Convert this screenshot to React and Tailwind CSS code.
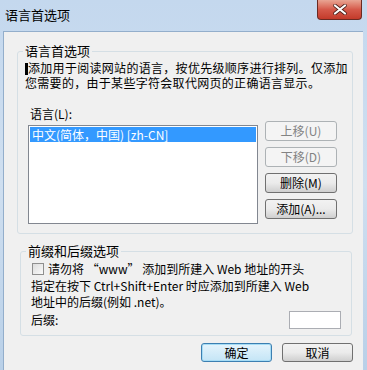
// App.jsx — 语言首选项 dialog (Windows 7 style)
const font = { fontFamily: '"Noto Sans CJK SC", "Liberation Sans", sans-serif' };

export default function App() {
  return (
    <div
      className="relative w-[367px] h-[370px] overflow-hidden bg-gradient-to-b from-[#c4d8ee] via-[#cfdff0] to-[#b9d0e8] text-[12px] leading-[16px] text-black"
      style={font}
    >
      {/* Title bar */}
      <div className="h-[31px] flex items-start pt-[7px] pl-[5px]">
        <span className="text-[13px] leading-[16px] text-black">语言首选项</span>
      </div>
      <CloseButton />

      {/* Client area */}
      <div className="ml-[3px] mr-[4px] h-[339px] bg-[#f0f0f0] border-t border-l border-[#93aecb] px-[13px]">
        <GroupBox title="语言首选项" className="mt-[11px] w-[333px] h-[191px]">
          <p className="pl-[7px] pr-[4px] mt-[1px] leading-[15px] tracking-[0.3px] whitespace-nowrap">
            <span className="inline-block w-[3px] h-[12px] bg-black align-[-2px]" />
            添加用于阅读网站的语言，按优先级顺序进行排列。仅添加
            <br />
            您需要的，由于某些字符会取代网页的正确语言显示。
          </p>
          <div className="pl-[12px] mt-[16px]">语言(L):</div>
          <div className="flex pl-[10px] mt-[3px] gap-[7px]">
            <div className="w-[230px] h-[99px] bg-white border border-[#828790] p-[1px]">
              <div className="h-[15px] bg-[#3399ff] text-white leading-[15px] pl-[2px]">
                中文(简体，中国) [zh-CN]
              </div>
            </div>
            <div className="flex flex-col gap-[6px] -mt-[4px]">
              <WinButton disabled>上移(U)</WinButton>
              <WinButton disabled>下移(D)</WinButton>
              <WinButton>删除(M)</WinButton>
              <WinButton>添加(A)...</WinButton>
            </div>
          </div>
        </GroupBox>

        <GroupBox title="前缀和后缀选项" className="mt-[9px] ml-[3px] w-[332px] h-[93px]">
          <label className="flex items-center gap-[4px] pl-[11px] mt-[2px]">
            <span className="w-[12px] h-[12px] border border-[#8f8f8f] bg-gradient-to-br from-[#dcdcdc] to-[#fbfbfb]" />
            <span>请勿将 “www” 添加到所建入 Web 地址的开头</span>
          </label>
          <p className="pl-[10px] mt-[1px] leading-[16px]">
            指定在按下 Ctrl+Shift+Enter 时应添加到所建入 Web
            <br />
            地址中的后缀(例如 .net)。
          </p>
          <div className="flex items-center justify-between pl-[10px] pr-[10px] mt-[1px]">
            <span>后缀:</span>
            <span className="w-[52px] h-[18px] bg-white border border-[#abadb3]" />
          </div>
        </GroupBox>

        <div className="flex justify-end gap-[10px] mt-[7px] mr-[-3px]">
          <button className="w-[71px] h-[19px] rounded-[3px] border border-[#3c7fb1] bg-gradient-to-b from-[#e5f4fc] to-[#c4e5f6] shadow-[inset_0_0_0_1px_#a6dcf5] text-[12px] leading-[16px]">
            确定
          </button>
          <button className="w-[71px] h-[19px] rounded-[3px] border border-[#707070] bg-gradient-to-b from-[#f2f2f2] via-[#ebebeb] to-[#cfcfcf] text-[12px] leading-[16px]">
            取消
          </button>
        </div>
      </div>
    </div>
  );
}

function GroupBox({ title, className, children }) {
  return (
    <fieldset className={`border border-[#d5dfe5] rounded-[3px] ${className}`}>
      <legend className="ml-[5px] px-[2px] text-[13px] leading-[16px]">{title}</legend>
      {children}
    </fieldset>
  );
}

function WinButton({ disabled, children }) {
  return (
    <button
      className={
        disabled
          ? "w-[72px] h-[20px] rounded-[3px] border border-[#adb2b5] bg-[#f4f4f4] text-[#838383] text-[12px] leading-[16px]"
          : "w-[72px] h-[20px] rounded-[3px] border border-[#707070] bg-gradient-to-b from-[#f2f2f2] via-[#ebebeb] to-[#cfcfcf] text-[12px] leading-[16px]"
      }
    >
      {children}
    </button>
  );
}

function CloseButton() {
  return (
    <div className="absolute left-[317px] top-0 w-[45px] h-[20px] rounded-b-[4px] border border-t-0 border-[#6b2a22] bg-gradient-to-b from-[#e8a493] via-[#d5594a] to-[#c33a2a] flex items-center justify-center">
      <svg width="14" height="11" viewBox="0 0 14 11">
        <path d="M2 1.5 L12 9.5 M12 1.5 L2 9.5" stroke="#4a1e18" strokeWidth="3.6" strokeLinecap="round" />
        <path d="M2 1.5 L12 9.5 M12 1.5 L2 9.5" stroke="#ffffff" strokeWidth="2.2" strokeLinecap="round" />
      </svg>
    </div>
  );
}
